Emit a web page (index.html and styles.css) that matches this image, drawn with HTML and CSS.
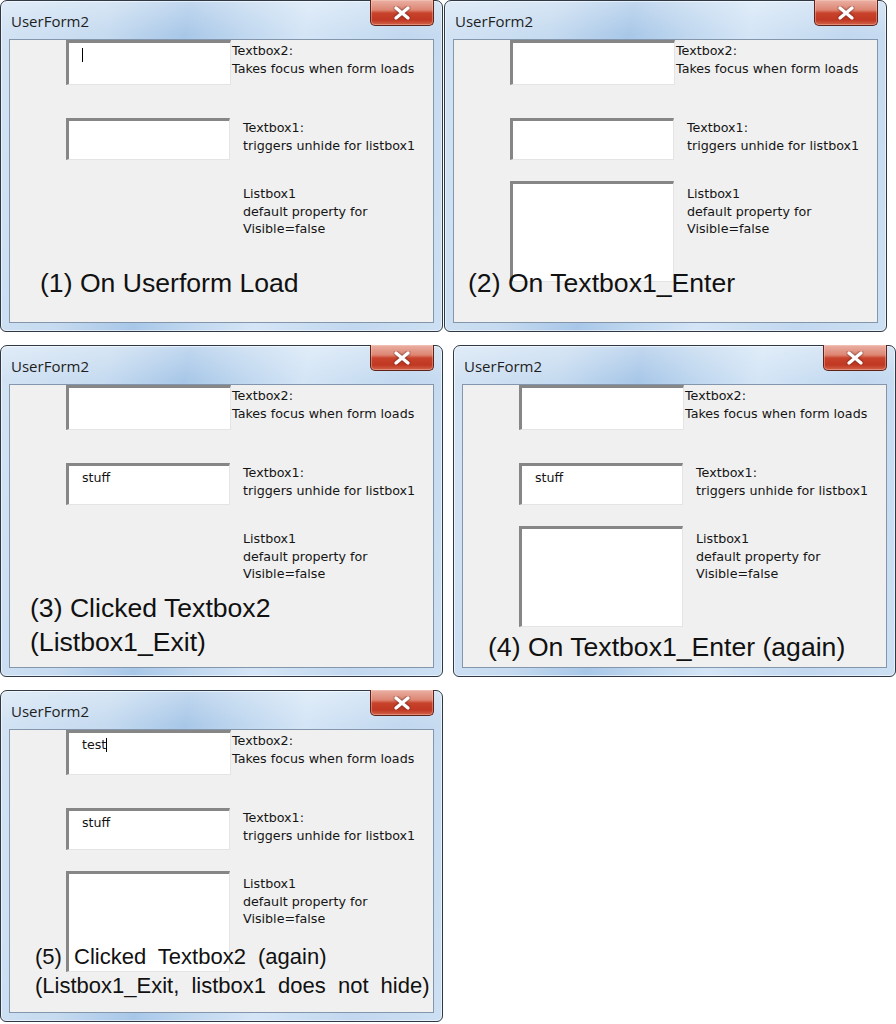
FILE: index.html
```html
<!DOCTYPE html>
<html lang="en">

<head>
    <meta charset="UTF-8">
    <title>UserForm2</title>
    <link rel="stylesheet" href="styles.css">
</head>

<body>
    <div class="desk">
        <div class="row">
            <!-- (1) -->
            <div class="win">
                <div class="titlebar">
                    <span class="title">UserForm2</span>
                    <span class="close"><svg viewBox="0 0 18 14" width="18" height="14"><path d="M3 2 L15 12 M15 2 L3 12" /></svg></span>
                </div>
                <div class="client">
                    <div class="line">
                        <div class="box tb2"><span class="caret"></span></div>
                        <div class="lbl lbl2">Textbox2:<br>Takes focus when form loads</div>
                    </div>
                    <div class="line second">
                        <div class="box tb1"></div>
                        <div class="lbl">Textbox1:<br>triggers unhide for listbox1</div>
                    </div>
                    <div class="line third">
                        <div class="box list off"></div>
                        <div class="lbl lbl3">Listbox1<br>default property for<br>Visible=false</div>
                    </div>
                </div>
                <p class="note n1">(1) On Userform Load</p>
            </div>

            <!-- (2) -->
            <div class="win">
                <div class="titlebar">
                    <span class="title">UserForm2</span>
                    <span class="close"><svg viewBox="0 0 18 14" width="18" height="14"><path d="M3 2 L15 12 M15 2 L3 12" /></svg></span>
                </div>
                <div class="client">
                    <div class="line">
                        <div class="box tb2"></div>
                        <div class="lbl lbl2">Textbox2:<br>Takes focus when form loads</div>
                    </div>
                    <div class="line second">
                        <div class="box tb1"></div>
                        <div class="lbl">Textbox1:<br>triggers unhide for listbox1</div>
                    </div>
                    <div class="line third">
                        <div class="box list"></div>
                        <div class="lbl lbl3">Listbox1<br>default property for<br>Visible=false</div>
                    </div>
                </div>
                <p class="note n2">(2) On Textbox1_Enter</p>
            </div>
        </div>

        <div class="row wide">
            <!-- (3) -->
            <div class="win">
                <div class="titlebar">
                    <span class="title">UserForm2</span>
                    <span class="close"><svg viewBox="0 0 18 14" width="18" height="14"><path d="M3 2 L15 12 M15 2 L3 12" /></svg></span>
                </div>
                <div class="client">
                    <div class="line">
                        <div class="box tb2"></div>
                        <div class="lbl lbl2">Textbox2:<br>Takes focus when form loads</div>
                    </div>
                    <div class="line second">
                        <div class="box tb1">stuff</div>
                        <div class="lbl">Textbox1:<br>triggers unhide for listbox1</div>
                    </div>
                    <div class="line third">
                        <div class="box list off"></div>
                        <div class="lbl lbl3">Listbox1<br>default property for<br>Visible=false</div>
                    </div>
                </div>
                <p class="note n3">(3) Clicked Textbox2<br>(Listbox1_Exit)</p>
            </div>

            <!-- (4) -->
            <div class="win">
                <div class="titlebar">
                    <span class="title">UserForm2</span>
                    <span class="close"><svg viewBox="0 0 18 14" width="18" height="14"><path d="M3 2 L15 12 M15 2 L3 12" /></svg></span>
                </div>
                <div class="client">
                    <div class="line">
                        <div class="box tb2"></div>
                        <div class="lbl lbl2">Textbox2:<br>Takes focus when form loads</div>
                    </div>
                    <div class="line second">
                        <div class="box tb1">stuff</div>
                        <div class="lbl">Textbox1:<br>triggers unhide for listbox1</div>
                    </div>
                    <div class="line third">
                        <div class="box list"></div>
                        <div class="lbl lbl3">Listbox1<br>default property for<br>Visible=false</div>
                    </div>
                </div>
                <p class="note n4">(4) On Textbox1_Enter (again)</p>
            </div>
        </div>

        <div class="row">
            <!-- (5) -->
            <div class="win">
                <div class="titlebar">
                    <span class="title">UserForm2</span>
                    <span class="close"><svg viewBox="0 0 18 14" width="18" height="14"><path d="M3 2 L15 12 M15 2 L3 12" /></svg></span>
                </div>
                <div class="client">
                    <div class="line">
                        <div class="box tb2">test<span class="caret"></span></div>
                        <div class="lbl lbl2">Textbox2:<br>Takes focus when form loads</div>
                    </div>
                    <div class="line second">
                        <div class="box tb1">stuff</div>
                        <div class="lbl">Textbox1:<br>triggers unhide for listbox1</div>
                    </div>
                    <div class="line third">
                        <div class="box list"></div>
                        <div class="lbl lbl3">Listbox1<br>default property for<br>Visible=false</div>
                    </div>
                </div>
                <p class="note n5">(5) Clicked Textbox2 (again)<br>(Listbox1_Exit, listbox1 does not hide)</p>
            </div>
        </div>
    </div>
</body>

</html>
```

FILE: styles.css
```css
body {
    margin: 0;
    background: #ffffff;
    font-family: "DejaVu Sans", sans-serif;
    color: #141414;
}

.desk {
    display: flex;
    flex-direction: column;
    gap: 13px;
}

.row {
    display: flex;
    gap: 1px;
}

.row.wide {
    gap: 10px;
}

/* window frame */
.win {
    position: relative;
    box-sizing: border-box;
    width: 443px;
    height: 332px;
    border: 1px solid #2f3945;
    border-radius: 7px 7px 6px 6px;
    box-shadow: inset 0 0 0 1px rgba(255, 255, 255, 0.55);
    background:
        linear-gradient(to bottom, rgba(255, 255, 255, 0.3), rgba(255, 255, 255, 0) 34px),
        linear-gradient(100deg, #d3e3f4 0%, #c6dbf0 22%, #a8c7e8 38%, #bcd5ee 48%, #d4e5f6 62%, #c2d8ef 82%, #cde0f3 100%);
}

.titlebar {
    height: 38px;
    box-sizing: border-box;
    padding: 10px 0 0 10px;
}

.title {
    font-family: "Open Sans", sans-serif;
    font-size: 15px;
    line-height: 20px;
    color: #1e1e1e;
}

.close {
    position: absolute;
    top: -1px;
    right: 8px;
    width: 64px;
    height: 26px;
    box-sizing: border-box;
    border: 1px solid #5e2219;
    border-top: none;
    border-radius: 0 0 5px 5px;
    background: linear-gradient(to bottom, #eab1a4 0%, #dd8572 40%, #c8432c 52%, #c03722 80%, #d3654b 100%);
    box-shadow: inset 0 0 0 1px rgba(255, 220, 210, 0.35);
    display: flex;
    align-items: center;
    justify-content: center;
}

.close svg path {
    fill: none;
    stroke: #ffffff;
    stroke-width: 3.4;
    stroke-linecap: round;
    filter: drop-shadow(0 0 1px #5a1b12);
}

.client {
    box-sizing: border-box;
    height: 284px;
    margin: 0 8px;
    border: 1px solid #8496ab;
    background: #f0f0f0;
    padding-left: 56px;
}

.line {
    display: flex;
    align-items: flex-start;
}

.line.second {
    margin-top: 33px;
}

.line.third {
    margin-top: 21px;
}

/* sunken controls */
.box {
    box-sizing: border-box;
    width: 164px;
    background: #ffffff;
    border-top: 3px solid #868686;
    border-left: 3px solid #868686;
    border-right: 1px solid #e4e4e4;
    border-bottom: 1px solid #e4e4e4;
    padding: 3px 0 0 13px;
    font-size: 12.6px;
    line-height: 17px;
}

.box.tb2 {
    width: 165px;
    height: 45px;
}

.box.tb1 {
    height: 42px;
}

.box.list {
    height: 101px;
}

.box.off {
    visibility: hidden;
}

.caret {
    display: inline-block;
    width: 1px;
    height: 14px;
    background: #000000;
    vertical-align: -3px;
}

.lbl {
    font-size: 12.7px;
    line-height: 17.5px;
    margin: 1px 0 0 13px;
    white-space: nowrap;
}

.lbl.lbl2 {
    margin: 2px 0 0 1px;
}

.lbl.lbl3 {
    margin-top: 4px;
}

/* captions written over the form */
.note {
    position: absolute;
    margin: 0;
    font-family: "Liberation Sans", Arial, sans-serif;
    font-size: 26.6px;
    line-height: 34px;
    color: #111111;
    white-space: nowrap;
}

.n1 {
    left: 39px;
    top: 265px;
}

.n2 {
    left: 23px;
    top: 265px;
}

.n3 {
    left: 29px;
    top: 245px;
}

.n4 {
    left: 34px;
    top: 284px;
}

.n5 {
    left: 34px;
    top: 251px;
    font-size: 22px;
    line-height: 29px;
    word-spacing: 6px;
}
```
